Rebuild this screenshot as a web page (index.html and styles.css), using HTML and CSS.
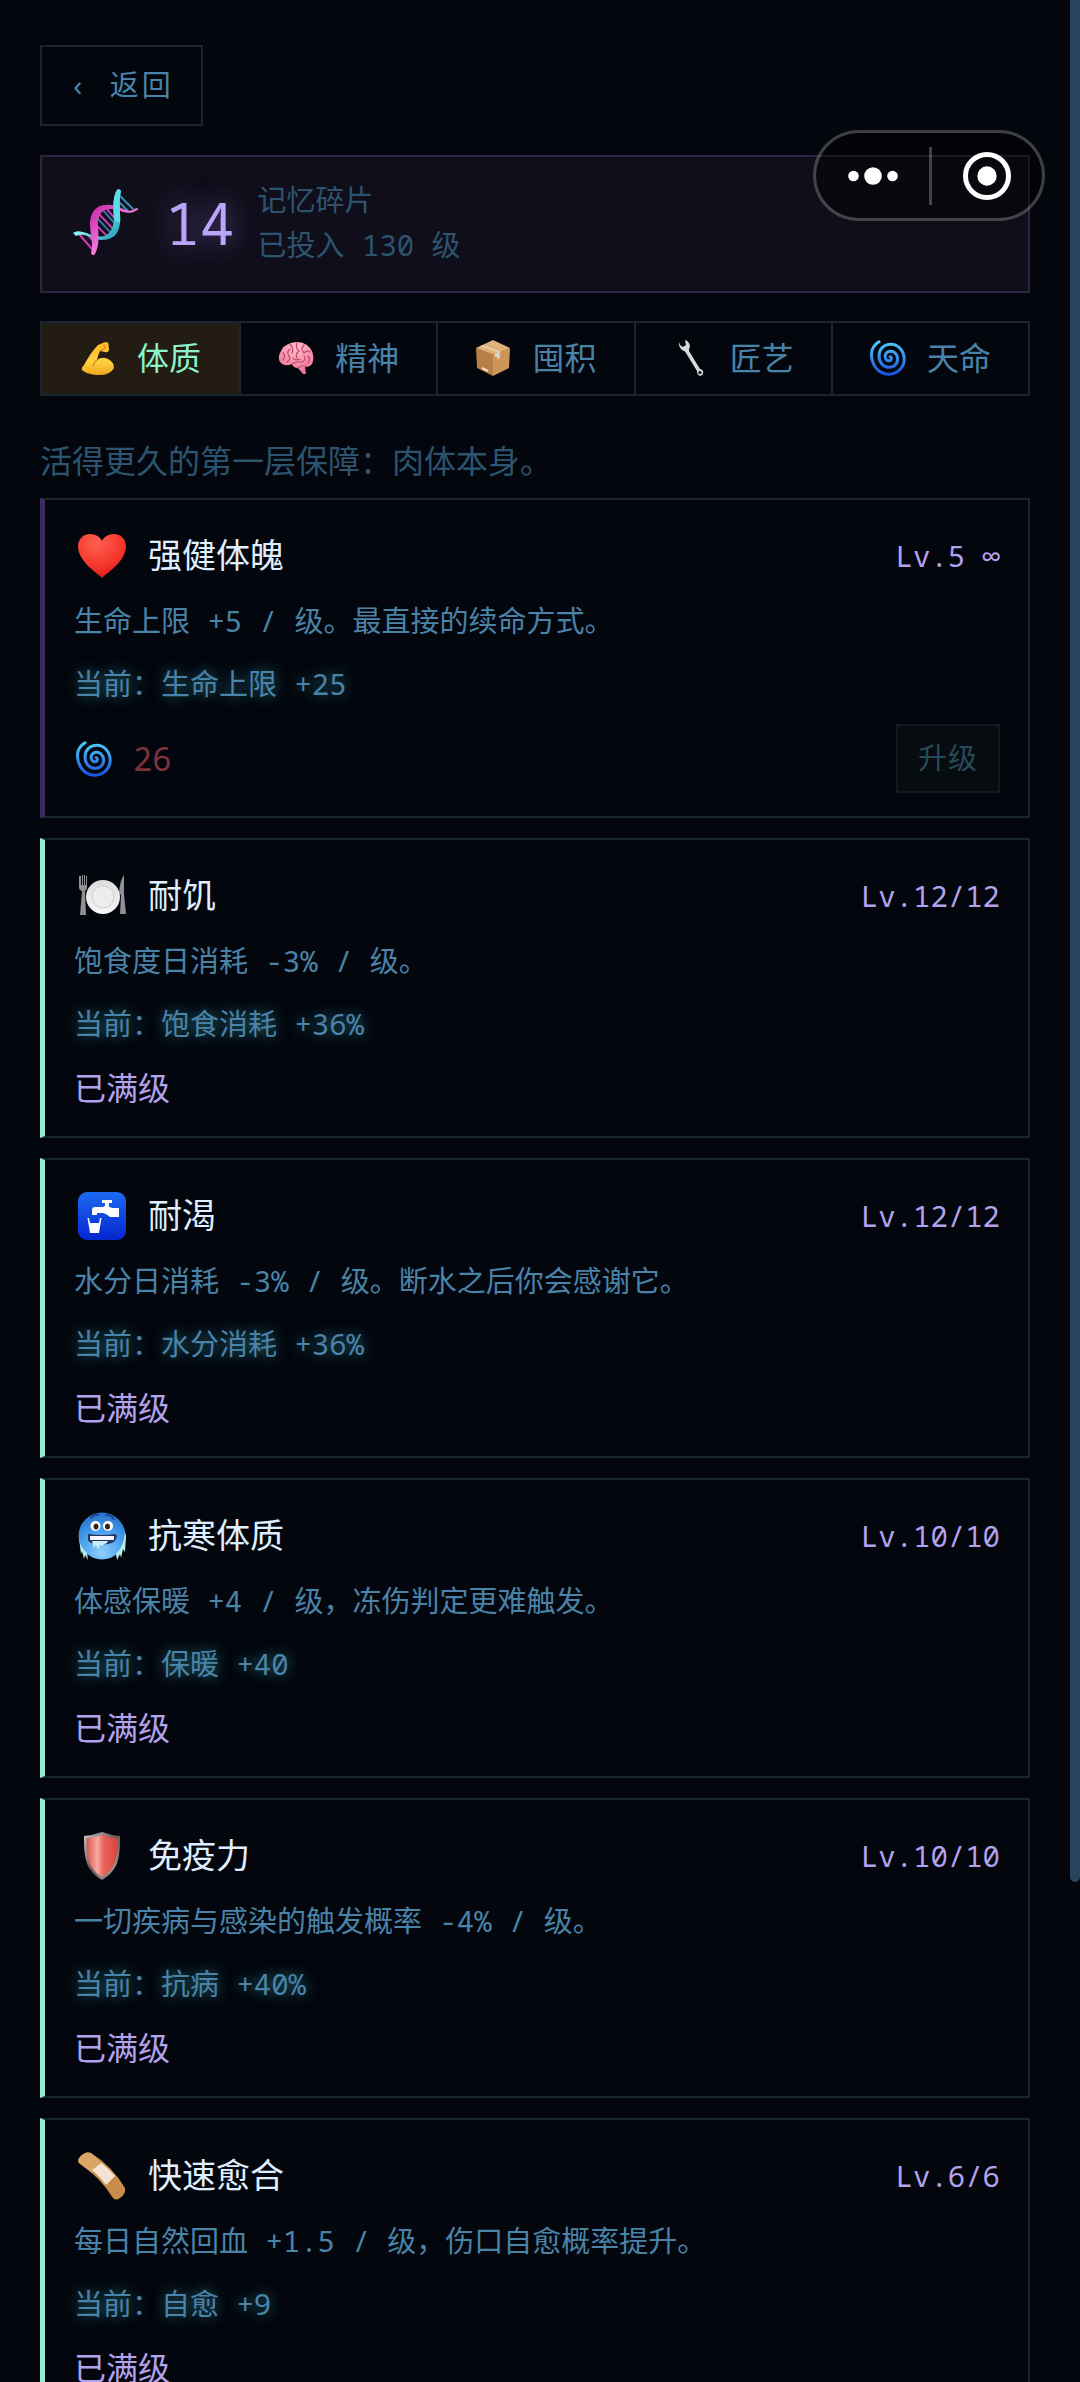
FILE: index.html
```html
<!DOCTYPE html>
<html lang="zh-CN">
<head>
<meta charset="utf-8">
<meta name="viewport" content="width=device-width, initial-scale=1">
<title>记忆碎片</title>
<link rel="stylesheet" href="styles.css">
</head>
<body>
<svg class="defs" aria-hidden="true">
  <defs>
    <linearGradient id="swirlBlue" x1="0" y1="0" x2="0" y2="1"><stop offset="0" stop-color="#4ccaf6"/><stop offset="1" stop-color="#1c54e2"/></linearGradient>
    <linearGradient id="dnaCyan" x1="0" y1="0" x2="1" y2="1"><stop offset="0" stop-color="#25c9d6"/><stop offset=".5" stop-color="#8cf0f6"/><stop offset="1" stop-color="#128fae"/></linearGradient>
    <linearGradient id="dnaPink" x1="0" y1="0" x2="1" y2="1"><stop offset="0" stop-color="#c21fa0"/><stop offset=".6" stop-color="#fb8aec"/><stop offset="1" stop-color="#d622b4"/></linearGradient>
    <radialGradient id="heartRed" cx=".4" cy=".2" r=".9"><stop offset="0" stop-color="#ff6152"/><stop offset=".6" stop-color="#f5352b"/><stop offset="1" stop-color="#cf1310"/></radialGradient>
    <linearGradient id="tapBlue" x1="0" y1="0" x2="0" y2="1"><stop offset="0" stop-color="#1c6af2"/><stop offset="1" stop-color="#0526cf"/></linearGradient>
    <radialGradient id="coldBlue" cx=".5" cy=".85" r=".9"><stop offset="0" stop-color="#8ed0fa"/><stop offset=".5" stop-color="#4aa2ee"/><stop offset="1" stop-color="#2368c4"/></radialGradient>
    <linearGradient id="shieldRed"><stop offset="0" stop-color="#d9534b"/><stop offset=".35" stop-color="#f6aaa2"/><stop offset=".55" stop-color="#e8645b"/><stop offset="1" stop-color="#d8453e"/></linearGradient>
    <linearGradient id="shieldRim" x1="0" y1="0" x2="1" y2="1"><stop offset="0" stop-color="#c9c4c4"/><stop offset=".5" stop-color="#6a5555"/><stop offset="1" stop-color="#bdb5b5"/></linearGradient>
    <linearGradient id="armGold" x1="0" y1="0" x2="0" y2="1"><stop offset="0" stop-color="#fbb92d"/><stop offset=".6" stop-color="#ffd040"/><stop offset="1" stop-color="#f0a51c"/></linearGradient>
    <radialGradient id="brainPink" cx=".5" cy=".2" r=".8"><stop offset="0" stop-color="#ffbfca"/><stop offset="1" stop-color="#ee6f94"/></radialGradient>
    <linearGradient id="plateWhite" x1="0" y1="0" x2="0" y2="1"><stop offset="0" stop-color="#dcdcdc"/><stop offset="1" stop-color="#f7f7f7"/></linearGradient>
    <symbol id="swirl" viewBox="0 0 36 36">
      <path d="M9 1.800 C2 6 .5 13 2.200 20 C4.500 29 11 34.300 19 34.200 C28 34 34.300 27 34.200 19 C34 10.500 28 4.200 21 4.200 C13.500 4.200 9 9.500 9 16 C9 23 14 27.500 19.500 27.300 C25 27 28 23 27.600 18.500 C27.200 13.500 23.500 11 20 11.300 C16.500 11.600 14.700 14.500 15.200 17.200 C15.700 20 18 21.300 20 20.600 C22 19.800 21.800 17.300 20.200 16.800" fill="none" stroke="url(#swirlBlue)" stroke-width="3" stroke-linecap="round" stroke-linejoin="round"/>
    </symbol>
  </defs>
</svg>

<main class="app">
  <button class="back" type="button">‹ 返回</button>

  <section class="summary">
    <svg class="summary-icon" viewBox="0 0 66 66" aria-hidden="true">
      <g stroke-width="2" stroke-linecap="round">
        <path d="M6 45 19 60M14 45l7 8" stroke="#d43bb6"/>
        <path d="M46 6 60 20M46 13l9 9" stroke="#2d92b8"/>
        <path d="M25 24 42 42M33 19l11 13M23 36l10 10" stroke="#c63bb4"/>
        <path d="M24 29l15 16M29 20l15 17" stroke="#35749f"/>
      </g>
      <path d="M0 44C7 39 14 46 24 47C34 50 41 41 41 29C40 16 40 8 44 1Q46-1 48 2C45 13 48 24 47 34C46 47 38 51 28 51C18 50 12 43 3 47Z" fill="url(#dnaCyan)"/>
      <path d="M64 21C55 28 47 20 39 20C27 19 24 29 25 39C26 48 26 57 22 65Q20 68 18 64C21 52 16 42 17 32C19 18 28 15 38 16C49 17 55 26 63 19Q67 20 64 21Z" fill="url(#dnaPink)"/>
      <path d="M41 31C40 16 40 8 44 1Q46-1 48 2C45 13 48 24 47 34Z" fill="#5ddbe6"/>
    </svg>
    <strong class="summary-count">14</strong>
    <div class="summary-text">
      <div>记忆碎片</div>
      <div>已投入 130 级</div>
    </div>
  </section>

  <nav class="tabs">
    <button class="tab active" type="button">
      <svg class="tab-icon" viewBox="0 0 36 36" aria-hidden="true"><path d="M18 5 24 2.500Q28 1 28.500 4L29 10Q28 13 25 12L20 11Q18 15 17 20Q22 16 28 19Q34 22 34 28Q30 36 16 35Q6 34 2 30Q1 28 4 25Q11 12 18 5Z" fill="url(#armGold)"/><path d="M20 11 24 9M17 20Q14 22 13 26M24 5l1 3" fill="none" stroke="#d58b12" stroke-width="1.300" stroke-linecap="round"/></svg>
      <span>体质</span>
    </button>
    <button class="tab" type="button">
      <svg class="tab-icon" viewBox="0 0 36 36" aria-hidden="true"><path d="M3 23Q-1 19 2 13Q5 5 13 3Q22 0 29 5Q37 12 35 21Q34 27 27 27L28 34 25 34 20 28Q15 28 14 24Q7 27 3 23Z" fill="url(#brainPink)"/><path d="M5 20Q8 15 5 13M9 22Q13 20 11 16Q8 12 12 9M12 4Q16 8 14 13M19 3Q17 8 21 11Q17 14 19 18M26 5Q22 9 26 13Q29 10 32 12M14 24Q18 21 24 22Q29 20 26 16M30 16Q33 19 30 23M20 28Q22 25 28 26M15 18Q17 21 22 19" fill="none" stroke="#c4456c" stroke-width="1.200" stroke-linecap="round"/></svg>
      <span>精神</span>
    </button>
    <button class="tab" type="button">
      <svg class="tab-icon" viewBox="0 0 36 36" aria-hidden="true"><path d="M1 8 18 0 35 8 18 16Z" fill="#dfb27c"/><path d="M1 8 18 14V36L2 28Z" fill="#b67f48"/><path d="M35 8 18 14V36L34 28Z" fill="#cc9559"/><path d="M8 5 25 11V18l-3 1.500V12L5 6Z" fill="#e9cba2"/><path d="M20 13h4v4h-4z" fill="#cfd6dc"/><path d="M7 28 13 31" stroke="#f0dfc6" stroke-width="2"/></svg>
      <span>囤积</span>
    </button>
    <button class="tab" type="button">
      <svg class="tab-icon" viewBox="0 0 36 36" aria-hidden="true"><path d="M6 2Q5 6 9 10Q12 11 13 13L24 31Q24 35 27 36Q31 35 30 31Q29 29 27 29L16 11Q16 9 17 6Q16 1 12 0L13 5 10 7 7 5Z" fill="#d9d9db"/><circle cx="27" cy="32.500" r="1.600" fill="#03060d"/></svg>
      <span>匠艺</span>
    </button>
    <button class="tab" type="button">
      <svg class="tab-icon" viewBox="0 0 36 36" aria-hidden="true"><use href="#swirl"/></svg>
      <span>天命</span>
    </button>
  </nav>

  <p class="hint">活得更久的第一层保障：肉体本身。</p>

  <section class="cards">
    <article class="card">
      <header class="card-head">
        <svg class="card-icon" viewBox="0 0 48 48" aria-hidden="true"><path d="M24 46C18 40 1 30 0 15C0 6 6 2 12 2C18 2 22 5 24 9C26 5 30 2 36 2C42 2 48 6 48 15C47 30 30 40 24 46Z" fill="url(#heartRed)"/></svg>
        <h2 class="card-title">强健体魄</h2>
        <span class="level">Lv.5 ∞</span>
      </header>
      <p class="desc">生命上限 +5 / 级。最直接的续命方式。</p>
      <p class="current">当前：生命上限 +25</p>
      <footer class="card-foot">
        <span class="cost"><svg class="cost-icon" viewBox="0 0 36 36" aria-hidden="true"><use href="#swirl"/></svg>26</span>
        <button class="upgrade" type="button" disabled>升级</button>
      </footer>
    </article>

    <article class="card maxed">
      <header class="card-head">
        <svg class="card-icon" viewBox="0 0 48 48" aria-hidden="true"><g fill="#8f9094"><path d="M1 4h2v9h1V3h1v10h1V3h1v10h1V4h1L9 16Q9 18 7 19L8 43H2L4 19Q1 18 1 15Z"/><path d="M46 3V22L48 42H42L43 23 41 21Q42 8 46 3Z"/></g><circle cx="25" cy="25" r="17" fill="url(#plateWhite)"/><circle cx="25" cy="25" r="11" fill="#ededed" stroke="#cfcfcf"/></svg>
        <h2 class="card-title">耐饥</h2>
        <span class="level">Lv.12/12</span>
      </header>
      <p class="desc">饱食度日消耗 -3% / 级。</p>
      <p class="current">当前：饱食消耗 +36%</p>
      <p class="full">已满级</p>
    </article>

    <article class="card maxed">
      <header class="card-head">
        <svg class="card-icon" viewBox="0 0 48 48" aria-hidden="true"><rect width="48" height="48" rx="9" fill="url(#tapBlue)"/><path d="M24 8h10v3h-3v4l4 1h6v9h-9Q29 22 25 21H19v2H14V18Q14 15 17 15H25l2-1V11H24ZM11 26l1 5h9l1-5h1.500L21 41H12L9.500 26Z" fill="#fff"/></svg>
        <h2 class="card-title">耐渴</h2>
        <span class="level">Lv.12/12</span>
      </header>
      <p class="desc">水分日消耗 -3% / 级。断水之后你会感谢它。</p>
      <p class="current">当前：水分消耗 +36%</p>
      <p class="full">已满级</p>
    </article>

    <article class="card maxed">
      <header class="card-head">
        <svg class="card-icon" viewBox="0 0 48 48" aria-hidden="true"><circle cx="24" cy="24" r="23.500" fill="url(#coldBlue)"/><path d="M1 26Q2 35 9 41L10 48 7 43 6 47 4 39 3 42ZM47 20Q46 34 38 42L39 48 42 42 43 46 45 37 47 40 48 24Z" fill="#b5eee8"/><path d="M13 6Q16 2 20 3M28 3Q33 3 36 7" fill="none" stroke="#184d94" stroke-width="2" stroke-linecap="round"/><circle cx="17.500" cy="14" r="5" fill="#fff"/><circle cx="30" cy="14" r="5" fill="#fff"/><ellipse cx="18" cy="14.500" rx="2.500" ry="3" fill="#3b1e17"/><ellipse cx="29.500" cy="14.500" rx="2.500" ry="3" fill="#3b1e17"/><path d="M10 22Q24 24 37 22Q40 23 38 27Q36 33 24 32Q12 33 10 28Z" fill="#24365f"/><path d="M12 24H36V28H12Z" fill="#f6f7fa"/><path d="M14 29H30Q29 32 26 32L24 34 22 33 20 38 18 33 16 36Z" fill="#c9eef7"/></svg>
        <h2 class="card-title">抗寒体质</h2>
        <span class="level">Lv.10/10</span>
      </header>
      <p class="desc">体感保暖 +4 / 级，冻伤判定更难触发。</p>
      <p class="current">当前：保暖 +40</p>
      <p class="full">已满级</p>
    </article>

    <article class="card maxed">
      <header class="card-head">
        <svg class="card-icon" viewBox="0 0 48 48" aria-hidden="true"><path d="M6 4Q16 3 24 0Q32 3 42 4C42 25 41 38 24 48C7 38 6 25 6 4Z" fill="url(#shieldRim)"/><path d="M8.500 6.500Q17 6 24 3Q31 6 39.500 6.500C39.500 25 38 36 24 45C10 36 8.500 25 8.500 6.500Z" fill="url(#shieldRed)"/></svg>
        <h2 class="card-title">免疫力</h2>
        <span class="level">Lv.10/10</span>
      </header>
      <p class="desc">一切疾病与感染的触发概率 -4% / 级。</p>
      <p class="current">当前：抗病 +40%</p>
      <p class="full">已满级</p>
    </article>

    <article class="card maxed">
      <header class="card-head">
        <svg class="card-icon" viewBox="0 0 48 48" aria-hidden="true"><path d="M2 5Q7-1 13 1Q34 14 47 36Q48 42 42 46Q38 49 35 46Q22 25 1 11Q-1 8 2 5Z" fill="#c88c4c"/><path d="M2 5Q7-1 13 1L24 11 14 21 1 11Q-1 8 2 5Z" fill="#d9a566"/><path d="M23.500 11Q32 18 37 24L28 33Q21 24 14 18Z" fill="#f4e3d3"/></svg>
        <h2 class="card-title">快速愈合</h2>
        <span class="level">Lv.6/6</span>
      </header>
      <p class="desc">每日自然回血 +1.5 / 级，伤口自愈概率提升。</p>
      <p class="current">当前：自愈 +9</p>
      <p class="full">已满级</p>
    </article>
  </section>
</main>

<div class="scroll-thumb"></div>

<div class="capsule">
  <button class="capsule-btn" type="button" aria-label="更多">
    <svg width="50" height="50" viewBox="0 0 50 50" aria-hidden="true"><g fill="#fff"><circle cx="5.500" cy="25" r="5.300"/><circle cx="25" cy="25" r="8.800"/><circle cx="44.500" cy="25" r="5.300"/></g></svg>
  </button>
  <button class="capsule-btn" type="button" aria-label="关闭">
    <svg width="50" height="50" viewBox="0 0 50 50" aria-hidden="true"><circle cx="25" cy="25" r="21.500" fill="none" stroke="#fff" stroke-width="5"/><circle cx="25" cy="25" r="9.700" fill="#fff"/></svg>
  </button>
</div>
</body>
</html>
```
FILE: styles.css
```css
:root {
  --bg: #03060d;
  --line: #1a2532;
  --text: #4a83a8;
  --dim: #2d546f;
  --bright: #e0efff;
  --violet: #b3a1ec;
  --mint: #97ebcf;
}

* {
  box-sizing: border-box;
}

body {
  margin: 0;
  background: var(--bg);
  color: var(--text);
  font-family: "Noto Sans Mono", "DejaVu Sans Mono", "Noto Sans CJK SC", monospace;
  font-size: 29px;
  line-height: 45px;
}

button {
  font: inherit;
  color: inherit;
  background: none;
  border: 0;
  padding: 0;
}

h2,
p {
  margin: 0;
  font-weight: 400;
}

.defs {
  position: absolute;
  width: 0;
  height: 0;
}

.app {
  height: 100vh;
  padding: 45px 50px 45px 40px;
  overflow-y: auto;
  scrollbar-width: none;
}

.back {
  display: block;
  padding: 15px 27px 17px;
  border: 2px solid var(--line);
  letter-spacing: 3px;
}

.summary {
  display: flex;
  align-items: center;
  margin-top: 29px;
  padding: 20px 31px 24px;
  border: 2px solid #2b2540;
  background: #100e1a;
}

.summary-icon {
  width: 66px;
  height: 66px;
}

.summary-count {
  margin-left: 26px;
  color: #b8a5fa;
  font-size: 58px;
  font-weight: 400;
  text-shadow: 0 0 29px rgba(160, 130, 250, 0.6);
}

.summary-text {
  margin-left: 23px;
  color: var(--dim);
}

.tabs {
  display: grid;
  grid-template-columns: repeat(5, 1fr);
  margin-top: 28px;
  border: 2px solid var(--line);
}

.tab {
  display: flex;
  align-items: center;
  justify-content: center;
  gap: 21px;
  padding: 10px 0 12px;
  font-size: 32px;
  line-height: 49px;
}

.tab + .tab {
  border-left: 2px solid var(--line);
}

.tab.active {
  background: #231c13;
  color: #8cf3ca;
}

.tab-icon,
.cost-icon {
  width: 36px;
  height: 36px;
}

.hint {
  margin: 40px 0 13px;
  color: var(--dim);
  font-size: 32px;
  line-height: 49px;
}

.cards {
  display: flex;
  flex-direction: column;
  gap: 20px;
}

.card {
  display: flex;
  flex-direction: column;
  gap: 18px;
  padding: 23px 28px 23px 29px;
  border: 2px solid var(--line);
  border-left: 5px solid #3e2a5e;
}

.card.maxed {
  padding-bottom: 25px;
  border-left-color: var(--mint);
}

.card-head {
  display: flex;
  align-items: center;
  height: 57px;
  padding-top: 7px;
}

.card-icon {
  width: 48px;
  height: 48px;
  margin: 2px 22px 0 4px;
}

.card-title {
  flex: 1;
  color: var(--bright);
  font-size: 34px;
}

.level {
  color: var(--violet);
}

.current {
  text-shadow: 0 0 14px rgba(70, 190, 210, 0.6);
}

.full {
  color: var(--violet);
  font-size: 32px;
  line-height: 47px;
}

.card-foot {
  display: flex;
  align-items: center;
  justify-content: space-between;
}

.cost {
  display: flex;
  align-items: center;
  gap: 21px;
  padding-left: 2px;
  color: #7e323b;
  font-size: 32px;
}

.upgrade {
  padding: 9px 20px 11px;
  border: 2px solid #0f1a20;
  background: #060c10;
  color: #274a5b;
  letter-spacing: 1px;
}

.scroll-thumb {
  position: fixed;
  top: 0;
  right: 0;
  width: 10px;
  height: 79%;
  border-radius: 0 0 5px 5px;
  background: #27435e;
}

.capsule {
  position: fixed;
  top: 130px;
  right: 35px;
  display: grid;
  grid-template-columns: 1fr 1fr;
  align-items: center;
  width: 232px;
  height: 91px;
  border: 3px solid rgba(255, 255, 255, 0.24);
  border-radius: 46px;
  background: rgba(0, 0, 0, 0.4);
}

.capsule-btn {
  display: flex;
  align-items: center;
  justify-content: center;
  height: 58px;
}

.capsule-btn + .capsule-btn {
  border-left: 3px solid rgba(255, 255, 255, 0.24);
}
```
